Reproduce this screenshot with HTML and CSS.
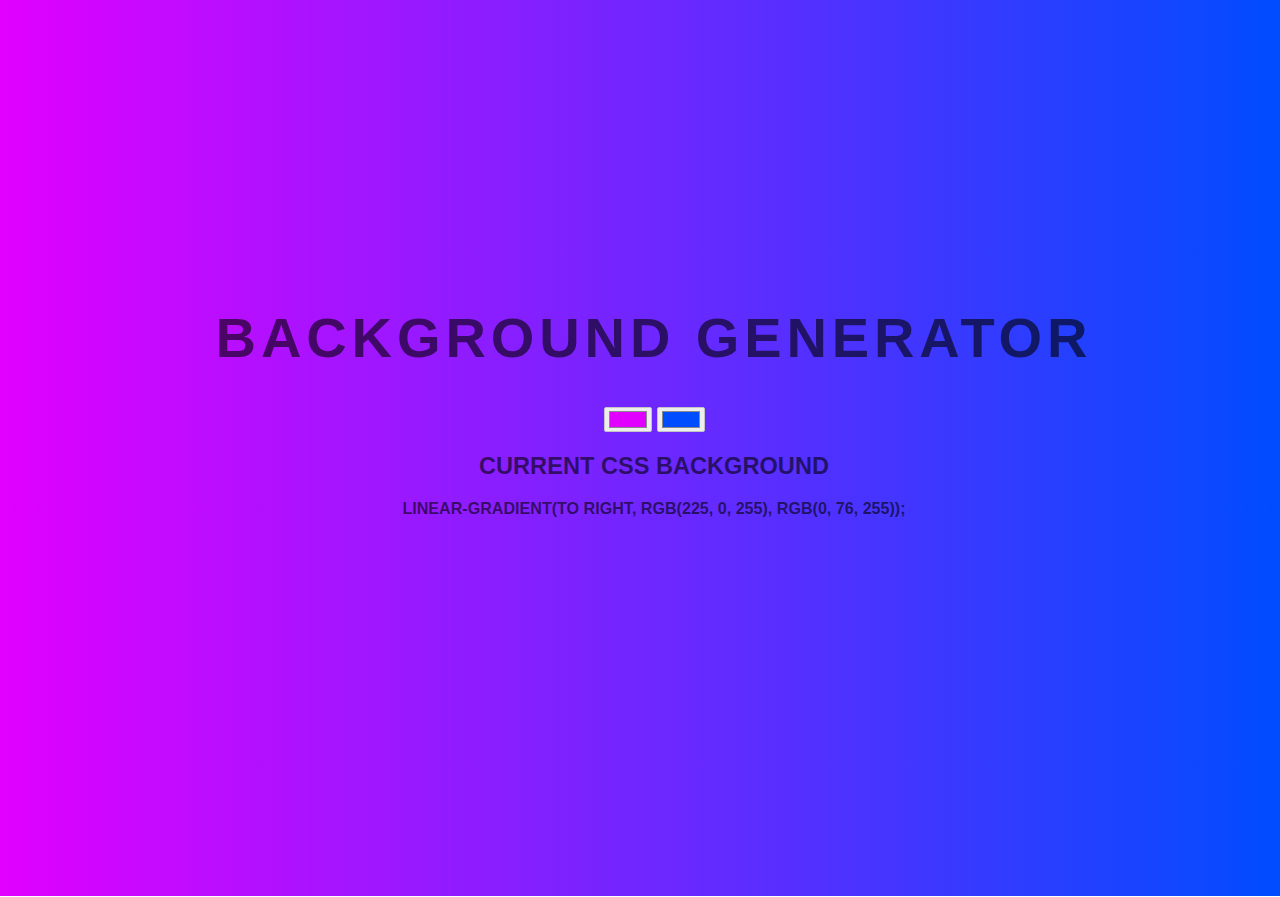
FILE: index.html
```html
<!DOCTYPE html>
<html lang="en">
<head>
<meta charset="utf-8">
<title>Background Generator</title>
<link rel="stylesheet" href="styles.css">
</head>
<body class="page">
  <main class="generator">
    <h1 class="title">Background Generator</h1>
    <div class="pickers">
      <input class="color1" type="color" name="color1" value="#e100ff">
      <input class="color2" type="color" name="color2" value="#004cff">
    </div>
    <h3 class="subtitle">Current CSS Background</h3>
    <p class="css-output">linear-gradient(to right, rgb(225, 0, 255), rgb(0, 76, 255));</p>
  </main>
</body>
</html>
```
FILE: styles.css
```css
html {
  background: #fff;
}

.page {
  margin: 0;
  min-height: 896px;
  box-sizing: border-box;
  background: linear-gradient(to right, rgb(225, 0, 255), rgb(0, 76, 255));
  font-family: "Liberation Sans", Arial, sans-serif;
  text-align: center;
  color: rgba(0, 0, 0, 0.6);
  padding: 306px 0 0 28px;
}

.generator {
  display: flex;
  flex-direction: column;
  align-items: center;
}

.title {
  margin: 0;
  font-size: 56px;
  font-weight: 700;
  line-height: 64px;
  letter-spacing: 4.9px;
  text-transform: uppercase;
}

.pickers {
  display: flex;
  gap: 5px;
  margin-top: 37px;
}

.pickers input {
  -webkit-appearance: none;
  appearance: none;
  width: 48px;
  height: 25px;
  margin: 0;
  padding: 0;
  box-sizing: border-box;
  border: 1px solid #c4c4c4;
  border-radius: 2px;
  background: #eeeeee;
  cursor: pointer;
}

.pickers input::-webkit-color-swatch-wrapper {
  padding: 3px 4px;
}

.pickers input::-webkit-color-swatch {
  border: 1px solid #8a8a8a;
  border-radius: 0;
}

.subtitle {
  margin: 21px 0 0;
  font-size: 23.6px;
  font-weight: 700;
  line-height: 27px;
  text-transform: uppercase;
}

.css-output {
  margin: 19px 0 0;
  font-size: 16.1px;
  font-weight: 700;
  line-height: 18px;
  text-transform: uppercase;
}
```
